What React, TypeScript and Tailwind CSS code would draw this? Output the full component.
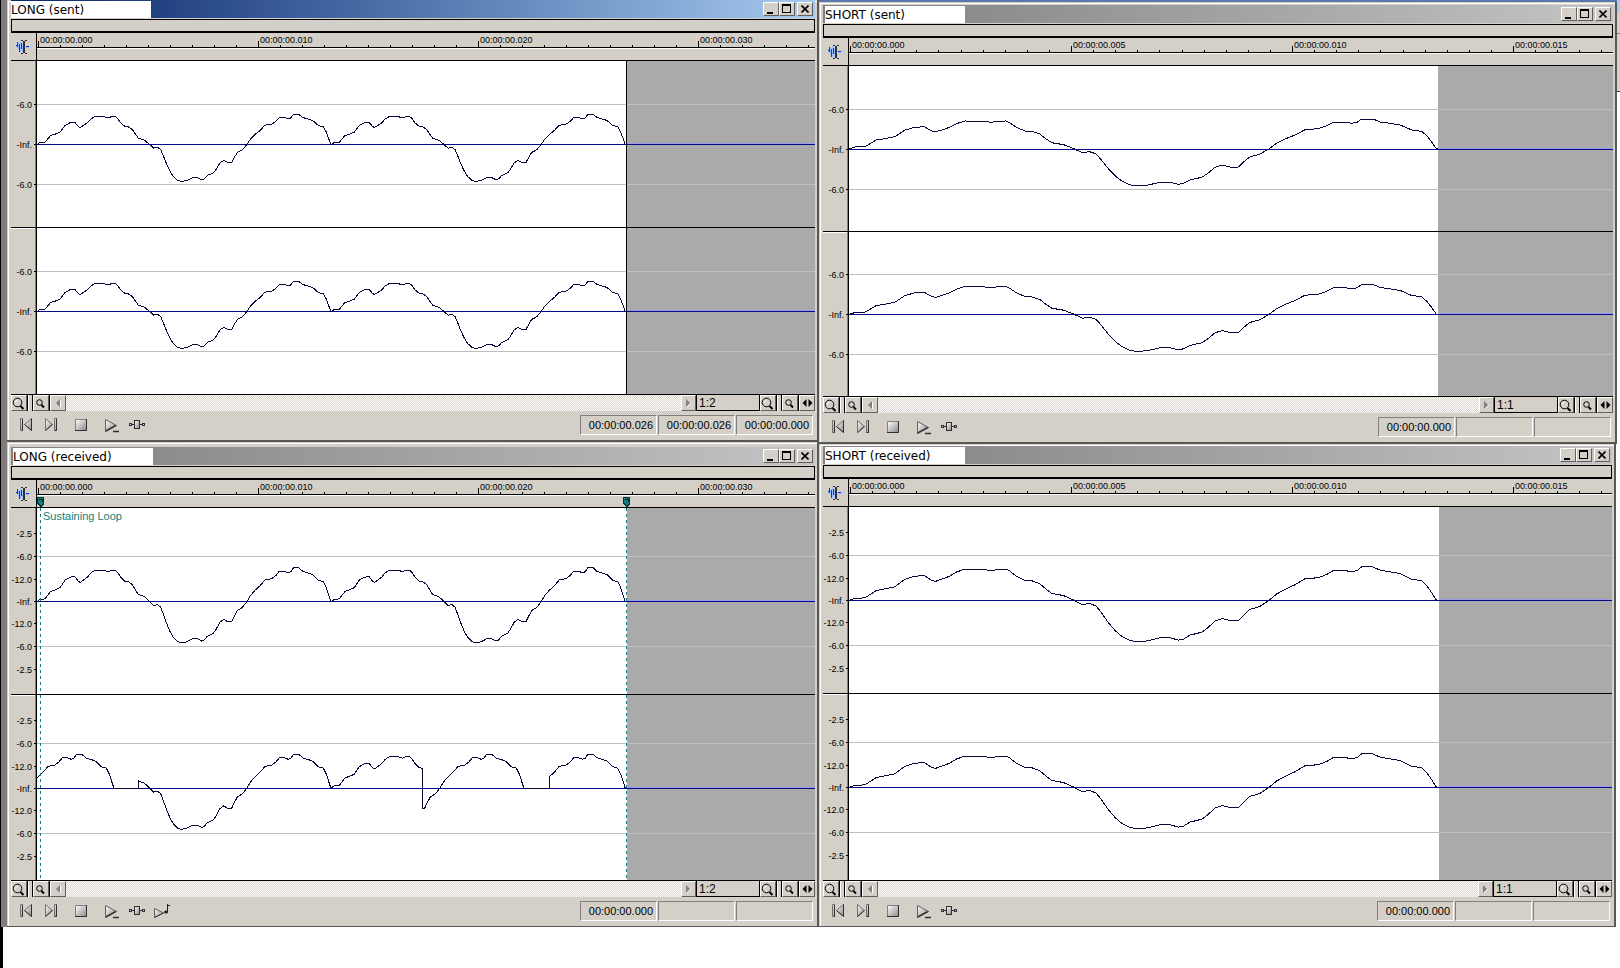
import { ReactNode } from 'react';
import clsx from 'clsx';

type Point = [number, number];
type Segment = { from: number; to: number; shift: number };

// One period of the recorded wave, in thirds of a pixel, amplitude up
const PERIOD = 883;
const WAVE: Point[] = [
  [0, 0], [9, 6], [24, 7], [41, 27], [54, 31], [69, 37], [84, 57], [99, 65], [113, 67], [122, 56],
  [129, 51], [139, 57], [151, 65], [161, 76], [174, 84], [202, 83], [214, 80], [222, 83], [235, 84], [241, 79],
  [251, 65], [264, 54], [274, 53], [286, 45], [296, 30], [304, 19], [322, 13], [336, 2], [350, -11], [361, -8],
  [371, -15], [379, -34], [389, -59], [399, -80], [409, -96], [421, -107], [432, -111], [449, -108], [466, -100], [482, -100],
  [494, -106], [502, -103], [511, -93], [529, -85], [537, -75], [549, -55], [560, -48], [572, -54], [584, -54], [592, -39],
  [601, -24], [616, -16], [629, -1], [641, 17], [654, 30], [669, 42], [684, 58], [704, 61], [717, 70], [727, 81],
  [742, 81], [754, 77], [762, 80], [769, 90], [786, 90], [797, 81], [811, 77], [827, 72], [844, 57], [859, 53],
  [867, 39], [874, 21], [881, 1], [883, 0],
];

const ONCE: Segment[] = [{ from: 0, to: PERIOD, shift: 0 }];
const TWICE: Segment[] = [...ONCE, { from: 0, to: PERIOD, shift: PERIOD }];
const BROKEN: Segment[] = [
  { from: 651, to: PERIOD, shift: -651 },
  { from: 304, to: PERIOD, shift: 0 },
  { from: 0, to: 273, shift: PERIOD },
  { from: 577, to: PERIOD, shift: 579 },
  { from: 653, to: PERIOD, shift: PERIOD },
];

function valueAt(x: number) {
  const i = Math.max(1, WAVE.findIndex(([px]) => px >= x));
  const [x0, y0] = WAVE[i - 1];
  const [x1, y1] = WAVE[i];
  return y0 + ((y1 - y0) * (x - x0)) / (x1 - x0);
}

function wavePoints(segments: Segment[], stretch: number, gain: number) {
  return segments
    .flatMap(({ from, to, shift }) => {
      const inner = WAVE.filter(([x]) => x > from && x < to);
      const all: Point[] = [[from, valueAt(from)], ...inner, [to, valueAt(to)]];
      return all.map(([x, y]): Point => [x + shift, y]);
    })
    .flatMap(([x, y], i, list) => {
      // silence holds the zero line until the next piece starts
      const prev = list[i - 1];
      const gap = prev && prev[1] === 0 && y !== 0 && x - prev[0] > 40;
      return gap ? [[x, 0] as Point, [x, y] as Point] : [[x, y] as Point];
    })
    .map(([x, y]) => `${((x * stretch) / 3).toFixed(1)},${((-y * gain) / 3).toFixed(1)}`)
    .join(' ');
}

type Scale = { label: string; offset: number }[];

const SENT_SCALE: Scale = [
  { label: '-6.0', offset: -40 },
  { label: '-Inf.', offset: 0 },
  { label: '-6.0', offset: 40 },
];
const RECEIVED_SCALE: Scale = [
  { label: '-2.5', offset: -68 },
  { label: '-6.0', offset: -45 },
  { label: '-12.0', offset: -22 },
  { label: '-Inf.', offset: 0 },
  { label: '-12.0', offset: 22 },
  { label: '-6.0', offset: 45 },
  { label: '-2.5', offset: 68 },
];

type Wave = {
  title: string;
  active?: boolean;
  frame: string;
  heights: string[];
  segment: string;
  times: string[];
  zoom: string;
  scale: Scale;
  channels: Segment[][];
  stretch: number;
  gain: number;
  dataEnd: number;
  cursor?: boolean;
  loop?: boolean;
  status: string[];
};

const LONG_TIMES = ['00:00:00.000', '00:00:00.010', '00:00:00.020', '00:00:00.030'];
const SHORT_TIMES = ['00:00:00.000', '00:00:00.005', '00:00:00.010', '00:00:00.015'];

const LEFT: Wave[] = [
  {
    title: 'LONG (sent)', active: true, frame: 'border-b-2', heights: ['h-[167px]', 'h-[167px]'], segment: 'w-[220px]',
    times: LONG_TIMES, zoom: '1:2', scale: SENT_SCALE, channels: [TWICE, TWICE], stretch: 1, gain: 1,
    dataEnd: 590, cursor: true, status: ['00:00:00.026', '00:00:00.026', '00:00:00.000'],
  },
  {
    title: 'LONG (received)', frame: 'border-b pt-[5px]', heights: ['h-[187px]', 'h-[186px]'], segment: 'w-[220px]',
    times: LONG_TIMES, zoom: '1:2', scale: RECEIVED_SCALE, channels: [TWICE, BROKEN], stretch: 1, gain: 1.12,
    dataEnd: 590, loop: true, status: ['00:00:00.000', '', ''],
  },
];

const RIGHT: Wave[] = [
  {
    title: 'SHORT (sent)', frame: 'border-b-2 pt-[3px]', heights: ['h-[166px]', 'h-[165px]'], segment: 'w-[221px]',
    times: SHORT_TIMES, zoom: '1:1', scale: SENT_SCALE, channels: [ONCE, ONCE], stretch: 2, gain: 1,
    dataEnd: 589, status: ['00:00:00.000', '', ''],
  },
  {
    title: 'SHORT (received)', frame: 'mr-px border-b pt-[2px]', heights: ['h-[187px]', 'h-[187px]'], segment: 'w-[221px]',
    times: SHORT_TIMES, zoom: '1:1', scale: RECEIVED_SCALE, channels: [ONCE, ONCE], stretch: 2, gain: 1.12,
    dataEnd: 590, status: ['00:00:00.000', '', ''],
  },
];

const BEVEL = 'border border-t-white border-l-white border-r-[#606060] border-b-[#606060] bg-[#d4d0c8]';

function BevelButton({ label, className, children }: { label: string; className: string; children: ReactNode }) {
  return (
    <button type="button" aria-label={label} className={clsx('flex shrink-0 items-center justify-center', BEVEL, className)}>
      {children}
    </button>
  );
}

function TitleBar({ title, active }: { title: string; active?: boolean }) {
  return (
    <header
      className={clsx(
        'mb-px flex h-[18px] items-center bg-linear-to-r pr-[2px]',
        active ? 'from-[#0a246a] to-[#a6caf0]' : 'from-[#808080] to-[#c4c4c4] pl-[2px]',
      )}
    >
      <h2 className="h-[17px] w-[140px] bg-white font-['DejaVu_Sans',sans-serif] text-[12px] leading-[18px] whitespace-nowrap">
        {title}
      </h2>
      <div className="ml-auto flex text-black">
        <BevelButton label="Minimize" className="h-[14px] w-4">
          <svg width="12" height="10" shapeRendering="crispEdges"><rect x="2" y="8" width="6" height="2" /></svg>
        </BevelButton>
        <BevelButton label="Maximize" className="mr-[2px] h-[14px] w-4">
          <svg width="10" height="10" shapeRendering="crispEdges">
            <path d="M0 0h9v9h-9zM1 2v6h7v-6z" fillRule="evenodd" />
          </svg>
        </BevelButton>
        <BevelButton label="Close" className="h-[14px] w-4">
          <svg width="8" height="8" stroke="#000" strokeWidth="1.6"><path d="M0.5 0.5l7 7M7.5 0.5l-7 7" /></svg>
        </BevelButton>
      </div>
    </header>
  );
}

function ToolIcon() {
  return (
    <svg width="16" height="14" shapeRendering="crispEdges" fill="none">
      <path d="M0 7.5h2M2.5 3v6M4.5 1v11M6.5 4v8M10 7.5h3M14 6.5h1" stroke="#99bbff" />
      <path d="M0 5.5h2M1.5 2v5M3.5 4v8M5.5 3v6M10 6.5h3" stroke="#1030f0" />
      <path d="M5 0.5h2M9 0.5h2M5 13.5h2M9 13.5h2M7.5 1v12M8.5 1v12" stroke="#303030" />
    </svg>
  );
}

function Ruler({ times, segment, loop, dataEnd }: Pick<Wave, 'times' | 'segment' | 'loop' | 'dataEnd'>) {
  return (
    <div className="flex border-b border-black">
      <div className="flex w-[26px] shrink-0 items-center justify-center border-r border-black">
        <ToolIcon />
      </div>
      <div className="min-w-0 flex-1">
        <div className="flex h-[14px] overflow-hidden pl-px">
          {times.map((time) => (
            <div key={time} className={clsx('flex shrink-0 flex-col', segment)}>
              <span className="h-2 pl-[2px] text-[9px] leading-[14px]">{time}</span>
              <div className="grid h-[6px] shrink-0 grid-cols-10 items-end">
                {Array.from({ length: 10 }, (_, i) => (
                  <i key={i} className={clsx('border-l border-black', i === 0 ? 'h-[6px]' : 'h-[2px]')} />
                ))}
              </div>
            </div>
          ))}
        </div>
        <div className="h-[2px] border-t border-black bg-white" />
        <svg className="block h-[11px] w-full">
          {loop &&
            [3, dataEnd - 1].map((x) => (
              <g key={x} transform={`translate(${x - 3} 1)`} shapeRendering="crispEdges">
                <path d="M0 0h7v7l-3 3h-1l-3-3z" fill="#003838" />
                <path d="M1 1h5v5l-2 2h-1l-2-2z" fill="#108080" />
                <path d="M2 2.500h3v2" fill="none" stroke="#002020" />
              </g>
            ))}
        </svg>
      </div>
    </div>
  );
}

function Channel({ wave, index }: { wave: Wave; index: number }) {
  const { scale, dataEnd, loop, cursor } = wave;
  return (
    <div className={clsx('flex border-b border-black', wave.heights[index])}>
      <svg className="h-full w-[26px] shrink-0 border-r border-black">
        {index > 0 && <rect width="100%" height="1" fill="#fff" />}
        <rect x="24" width="1" height="100%" fill="#808080" />
        <svg y="50%" overflow="visible">
          {scale.map(({ label, offset }) => (
            <g key={offset}>
              <text x="21" y={offset + 4} textAnchor="end" fontSize="9">{label}</text>
              <rect x="23" y={offset} width="2" height="1" shapeRendering="crispEdges" />
            </g>
          ))}
        </svg>
      </svg>
      <svg className="h-full min-w-0 flex-1 bg-white" shapeRendering="crispEdges">
        <rect x={dataEnd} width="100%" height="100%" fill="#aaaaaa" />
        <svg y="50%" overflow="visible">
          {scale
            .filter(({ label }) => label === '-6.0')
            .map(({ offset }) => (
              <rect key={offset} y={offset} width="100%" height="1" fill="#bebebe" />
            ))}
          <rect x={dataEnd} y="-1" width="100%" height="1" fill="#9a9aee" />
          <rect width="100%" height="1" fill="#08088a" />
          <polyline
            points={wavePoints(wave.channels[index], wave.stretch, wave.gain)}
            transform="translate(0 0.5)"
            fill="none"
            stroke="#0a0638"
          />
        </svg>
        {cursor && <rect x={dataEnd - 1} width="1" height="100%" />}
        {loop && (
          <g stroke="#108080" strokeDasharray="3 3">
            <path d="M3.500 0v200" />
            <path d={`M${dataEnd - 0.5} 0v200`} />
          </g>
        )}
        {loop && index === 0 && (
          <text x="6" y="12" fontSize="11" fill="#108080">Sustaining Loop</text>
        )}
      </svg>
    </div>
  );
}

function Magnifier({ small }: { small?: boolean }) {
  return (
    <svg width="14" height="13" fill="none" stroke="#000">
      {small ? (
        <>
          <circle cx="5.500" cy="5.500" r="2.800" />
          <path d="M7.500 8l2.500 2.500" strokeWidth="2" />
        </>
      ) : (
        <>
          <circle cx="5.500" cy="5.500" r="4.300" />
          <path d="M3.500 5.500a2 2 0 0 1 2-2" stroke="#fff" />
          <path d="M8.500 9l3 3" strokeWidth="2" />
        </>
      )}
    </svg>
  );
}

function ZoomPair() {
  return (
    <>
      <BevelButton label="Zoom in" className="h-4 w-4"><Magnifier /></BevelButton>
      <div className="w-[6px] shrink-0 border-x border-black bg-[#d4d0c8] shadow-[inset_1px_0_0_#fff]" />
      <BevelButton label="Zoom out" className="h-4 w-4"><Magnifier small /></BevelButton>
      <div className="w-px shrink-0 bg-black" />
    </>
  );
}

function ScrollRow({ zoom }: { zoom: string }) {
  return (
    <div className="flex h-4">
      <ZoomPair />
      <BevelButton label="Scroll left" className="h-4 w-4">
        <svg width="5" height="8"><path d="M4 0v8l-4-4z" fill="#808080" /><path d="M4.500 1v7" stroke="#fff" /></svg>
      </BevelButton>
      <div className="flex-1 bg-[conic-gradient(#fff_25%,#d8d4cc_0_50%,#fff_0_75%,#d8d4cc_0)] bg-[length:2px_2px]" />
      <BevelButton label="Scroll right" className="h-4 w-[15px]">
        <svg width="5" height="8"><path d="M0 0v8l4-4z" fill="#808080" /><path d="M1 8l4-4" stroke="#fff" /></svg>
      </BevelButton>
      <span className="w-16 shrink-0 border-x border-b border-black pl-[2px] text-[12px] leading-[16px]">{zoom}</span>
      <ZoomPair />
      <BevelButton label="Zoom time" className="h-4 w-4">
        <svg width="11" height="8"><path d="M4.500 0v8l-4-4zM6.500 0v8l4-4z" /></svg>
      </BevelButton>
    </div>
  );
}

const DARK = '#303030';

function Transport({ loop, status }: Pick<Wave, 'loop' | 'status'>) {
  const button = 'flex w-[25px] items-center justify-center';
  return (
    <footer className="flex h-[29px] items-start pt-[4px] pr-[2px] pl-[3px]">
      <svg width="0" height="0" className="absolute">
        <linearGradient id="metal" x2="1" y2="1">
          <stop offset="0" stopColor="#fff" />
          <stop offset="1" stopColor="#888" />
        </linearGradient>
      </svg>
      <div className="flex h-[20px]">
        <button type="button" aria-label="Go to start" className={button}>
          <svg width="13" height="14" fill="url(#metal)">
            <path d="M0.500 0.500h2v12h-2z" stroke="#707070" />
            <path d="M2.500 1v12" stroke={DARK} />
            <path d="M11.500 0.500v12l-7-6z" stroke="#707070" />
            <path d="M4.500 6.500l7 6v-12" stroke={DARK} fill="none" />
          </svg>
        </button>
        <button type="button" aria-label="Go to end" className={button}>
          <svg width="13" height="14" fill="url(#metal)">
            <path d="M0.500 0.500v12l7-6z" stroke="#707070" />
            <path d="M0.500 12.500l7-6" stroke={DARK} />
            <path d="M9.500 0.500h2v12h-2z" stroke="#707070" />
            <path d="M11.500 0.500v12h-2" stroke={DARK} fill="none" />
          </svg>
        </button>
        <button type="button" aria-label="Stop" className={clsx(button, 'ml-[5px]')}>
          <svg width="13" height="14">
            <path d="M0.500 1.500h11v11h-11z" fill="url(#metal)" stroke="#808080" />
            <path d="M0 12.500h11.500v-11.500" fill="none" stroke={DARK} />
          </svg>
        </button>
        <button type="button" aria-label="Play" className={clsx(button, 'ml-[5px]')}>
          <svg width="15" height="14" className="overflow-visible">
            <path d="M1.500 1.500v12l11-6z" fill="url(#metal)" stroke="#606060" />
            <path d="M1.500 13.500l11-6M2 12.500l9-5" stroke={DARK} />
            <path d="M9 13.500h6" stroke={DARK} strokeWidth="1.500" />
          </svg>
        </button>
        <button type="button" aria-label="Play plug-in chainer" className={button}>
          <svg width="16" height="10" shapeRendering="crispEdges">
            <path d="M3 4.500h10" stroke={DARK} />
            <path d="M5.500 0.500h5v8h-5z" fill="url(#metal)" stroke={DARK} />
            <path d="M0.500 3.500h2v2h-2zM13.500 3.500h2v2h-2z" fill="#ddd" stroke={DARK} />
          </svg>
        </button>
        {loop && (
          <button type="button" aria-label="Play as sample" className={button}>
            <svg width="16" height="15">
              <path d="M0.500 4.500v9l9-4.500z" fill="url(#metal)" stroke="#606060" />
              <path d="M0.500 13.500l9-4.500" stroke={DARK} />
              <path d="M13.500 8v-8M14 1.500h2" stroke="#202020" />
              <ellipse cx="12" cy="8" rx="2" ry="1.500" fill="#202020" />
            </svg>
          </button>
        )}
      </div>
      <div className="ml-auto flex gap-px">
        {status.map((time, i) => (
          <output
            key={i}
            className="h-[20px] w-[77px] border border-t-[#808080] border-r-white border-b-white border-l-[#808080] pr-[3px] text-right text-[11px] leading-[18px]"
          >
            {time}
          </output>
        ))}
      </div>
    </footer>
  );
}

function WaveWindow({ wave }: { wave: Wave }) {
  return (
    <section
      className={clsx(
        'border-r-2 border-[#585858] bg-[#d4d0c8] pr-[2px] pl-[4px] shadow-[inset_1px_1px_0_#d4d0c8,inset_2px_2px_0_#fff]',
        wave.frame,
      )}
    >
      <TitleBar title={wave.title} active={wave.active} />
      <div className="h-[14px] border border-b-2 border-black" />
      <Ruler times={wave.times} segment={wave.segment} loop={wave.loop} dataEnd={wave.dataEnd} />
      {wave.channels.map((_, i) => (
        <Channel key={i} wave={wave} index={i} />
      ))}
      <ScrollRow zoom={wave.zoom} />
      <Transport loop={wave.loop} status={wave.status} />
    </section>
  );
}

export default function App() {
  return (
    <main className="flex min-h-screen flex-col bg-white font-['Liberation_Sans',Arial,sans-serif] text-black">
      <div className="flex">
        <div className="w-[7px] shrink-0 border-l border-black bg-[#807c7c]" />
        <div className="min-w-0 flex-[812]">
          {LEFT.map((wave) => (
            <WaveWindow key={wave.title} wave={wave} />
          ))}
        </div>
        <div className="min-w-0 flex-[798]">
          <div className="h-[2px] bg-[#5a78ac]" />
          {RIGHT.map((wave) => (
            <WaveWindow key={wave.title} wave={wave} />
          ))}
        </div>
        <div className="w-[3px] shrink-0">
          <div className="h-[12px] bg-[#a6caf0]" />
          <div className="h-[22px] border-b border-[#808080] bg-[#d4d0c8]" />
          <div className="h-[58px] border-b border-[#404040] bg-[#d4d0c8]" />
        </div>
      </div>
      <div className="w-[3px] flex-1 bg-black" />
    </main>
  );
}
